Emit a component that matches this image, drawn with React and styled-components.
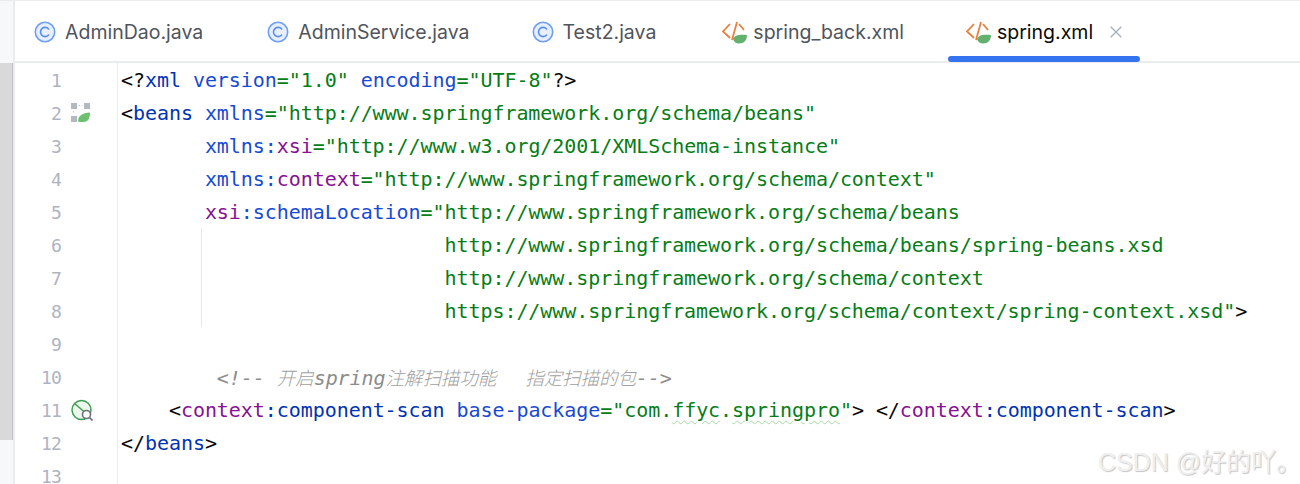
import React from "react";
import styled, { createGlobalStyle } from "styled-components";

const Global = createGlobalStyle`
  html, body { margin: 0; padding: 0; background: #fff; }
  #root { width: 1300px; height: 484px; overflow: hidden; }
`;

const Page = styled.div`
  position: relative;
  width: 1300px;
  height: 484px;
  overflow: hidden;
  display: flex;
  background: #fff;
  border-top: 1px solid #ebecf0;
  box-sizing: border-box;
`;
const Rail = styled.div`
  flex: 0 0 15px;
  background: #f7f8fa;
  border-right: 2px solid #ebecf0;
  box-sizing: border-box;
  display: flex;
  flex-direction: column;
`;
const RailTop = styled.div`
  flex: 0 0 62px;
`;
const RailThumb = styled.div`
  flex: 0 0 377px;
  width: 12px;
  background: #d9d9d9;
  border-right: 1px solid #bfbfbf;
`;
const Main = styled.div`
  flex: 1;
  min-width: 0;
  display: flex;
  flex-direction: column;
`;
const TabBar = styled.div`
  flex: 0 0 62px;
  box-sizing: border-box;
  display: flex;
  padding-left: 1px;
  border-bottom: 2px solid #ebecf0;
`;
const Tab = styled.div`
  position: relative;
  display: flex;
  align-items: center;
  height: 60px;
  box-sizing: border-box;
  padding: 1px ${p => p.$end}px 0 18px;
  font: 19.5px Inter, "Liberation Sans", sans-serif;
  color: ${p => (p.$active ? "#0a0a0a" : "#50545c")};
  &::after {
    content: ${p => (p.$active ? '""' : "none")};
    position: absolute;
    left: 0;
    right: 0;
    bottom: -1px;
    height: 6px;
    border-radius: 3px;
    background: #3574f0;
  }
`;
const TabIconSlot = styled.span`
  display: flex;
  width: 31px;
  flex: 0 0 31px;
`;
const Close = styled.span`
  display: flex;
  margin-left: 17px;
`;
const Editor = styled.div`
  flex: 1;
  display: flex;
  min-height: 0;
  padding-top: 1px;
`;
const Gutter = styled.div`
  flex: 0 0 102px;
  margin-top: -1px;
  border-right: 1px solid #ebecf0;
`;
const GutterRow = styled.div`
  height: 33px;
  box-sizing: border-box;
  padding-top: 1px;
  display: flex;
  align-items: center;
`;
const LineNo = styled.span`
  flex: 0 0 46px;
  text-align: right;
  font: 18px "DejaVu Sans Mono", monospace;
  letter-spacing: -0.8px;
  color: #aeb3c2;
`;
const Mark = styled.span`
  display: flex;
  margin-left: 10px;
`;
const Code = styled.div`
  flex: 1;
  padding-left: 3px;
  font: 20px/33px "DejaVu Sans Mono", "Noto Sans CJK SC", monospace;
  letter-spacing: -0.06px;
  white-space: pre;
`;
const Line = styled.div`
  position: relative;
  height: 33px;
  color: #080808;
  &::before {
    content: ${p => (p.$guide ? '""' : "none")};
    position: absolute;
    left: 80px;
    top: -1px;
    bottom: 1px;
    width: 1px;
    background: #e6e7eb;
  }
`;
const Tag = styled.span`color: #0033b3;`;
const Attr = styled.span`color: #174ad4;`;
const Ns = styled.span`color: #871094;`;
const Val = styled.span`color: #067d17;`;
const Comment = styled.span`
  color: #8c8c8c;
  font-style: italic;
`;
const Cjk = styled.span`
  font-family: "Noto Sans CJK SC", sans-serif;
  font-size: 18.5px;
  font-weight: 300;
  color: #a0a0a0;
`;
const CjkGap = styled.span`
  display: inline-block;
  width: 29px;
`;
const Typo = styled.span`
  text-decoration: underline wavy #a8d8a4 1px;
  text-underline-offset: 3px;
`;
const Watermark = styled.div`
  position: absolute;
  left: 1098px;
  top: 444px;
  font: 25px/34px "Liberation Sans", "Noto Sans CJK SC", sans-serif;
  white-space: nowrap;
  color: #efefef;
  text-shadow: 1px 1px 1px #c6c6c6;
`;

const ClassIcon = () => (
  <svg width="22" height="22" viewBox="0 0 22 22" fill="none">
    <circle cx="11" cy="11" r="9.7" fill="#e7effd" stroke="#6f9ff5" strokeWidth="1.6" />
    <path d="M14.6 8a4.6 4.6 0 1 0 0 6" stroke="#5a8ff0" strokeWidth="1.6" strokeLinecap="round" />
  </svg>
);
const XmlIcon = () => (
  <svg width="25" height="24" viewBox="0 0 25 24" fill="none">
    <path d="M8 4 1 11.500 8 18M15 2 10 20M17 4l5 6" stroke="#e8803c" strokeWidth="1.800" />
    <path d="M11 19c1-4 7-5 14-4 0 5-3 8.500-8 8.500-3 0-5-1.500-6-4.500z" fill="#62b16e" />
  </svg>
);
const CloseIcon = () => (
  <svg width="12" height="12" viewBox="0 0 12 12" fill="none">
    <path d="M.7.7l10.600 10.600M11.300.7.7 11.300" stroke="#a8adbd" strokeWidth="1.300" />
  </svg>
);
const BeanMark = () => (
  <svg width="19" height="20" viewBox="0 0 19 20" fill="none">
    <rect x="0" y="0" width="6" height="6" fill="#b4b8bf" />
    <rect x="13" y="0" width="6" height="6" fill="#b4b8bf" />
    <rect x="0" y="13" width="6" height="6" fill="#b4b8bf" />
    <path d="M7.500 2.500h4M2.500 8v3" stroke="#c4c7cc" strokeDasharray="1.500 1.500" />
    <path d="M7 18.500C7 13 11 10 19 9.500c0 6-2 9.500-6.500 9.500-2.500 0-4.500 0-5.500-.5z" fill="#6cc070" />
  </svg>
);
const ScanMark = () => (
  <svg width="22" height="22" viewBox="0 0 22 22" fill="none">
    <circle cx="10.500" cy="11" r="9.500" fill="#eef7ee" stroke="#3f9e55" strokeWidth="1.500" />
    <path d="M3.500 4.500l10 8.500" stroke="#3f9e55" strokeWidth="1.500" />
    <circle cx="15.500" cy="15.500" r="4" fill="#fff" stroke="#6c707e" strokeWidth="1.600" />
    <path d="M18.500 18.500l3 3" stroke="#6c707e" strokeWidth="1.700" />
  </svg>
);

const sp = n => " ".repeat(n);
const lines = [
  { key: 1, code: <><span>&lt;?</span><Tag>xml</Tag> <Attr>version</Attr><Val>="1.0"</Val> <Attr>encoding</Attr><Val>="UTF-8"</Val>?&gt;</> },
  { key: 2, mark: <BeanMark />, code: <>&lt;<Tag>beans</Tag> <Attr>xmlns</Attr><Val>="http://www.springframework.org/schema/beans"</Val></> },
  { key: 3, code: <>{sp(7)}<Attr>xmlns:</Attr><Ns>xsi</Ns><Val>="http://www.w3.org/2001/XMLSchema-instance"</Val></> },
  { key: 4, code: <>{sp(7)}<Attr>xmlns:</Attr><Ns>context</Ns><Val>="http://www.springframework.org/schema/context"</Val></> },
  { key: 5, code: <>{sp(7)}<Ns>xsi</Ns><Attr>:schemaLocation</Attr><Val>="http://www.springframework.org/schema/beans</Val></> },
  { key: 6, guide: true, code: <Val>{sp(27)}http://www.springframework.org/schema/beans/spring-beans.xsd</Val> },
  { key: 7, guide: true, code: <Val>{sp(27)}http://www.springframework.org/schema/context</Val> },
  { key: 8, guide: true, code: <><Val>{sp(27)}https://www.springframework.org/schema/context/spring-context.xsd"</Val>&gt;</> },
  { key: 9, code: null },
  { key: 10, code: <Comment>{sp(8)}&lt;!-- <Cjk>开启</Cjk>spring<Cjk>注解扫描功能</Cjk><CjkGap /><Cjk>指定扫描的包</Cjk>--&gt;</Comment> },
  { key: 11, mark: <ScanMark />, code: <>{sp(4)}&lt;<Ns>context</Ns><Tag>:component-scan</Tag> <Attr>base-package</Attr><Val>="com.<Typo>ffyc</Typo>.<Typo>springpro</Typo>"</Val>&gt; &lt;/<Ns>context</Ns><Tag>:component-scan</Tag>&gt;</> },
  { key: 12, code: <>&lt;/<Tag>beans</Tag>&gt;</> },
  { key: 13, code: null },
];

const tabs = [
  { name: "AdminDao.java", icon: <ClassIcon />, end: 46 },
  { name: "AdminService.java", icon: <ClassIcon />, end: 44 },
  { name: "Test2.java", icon: <ClassIcon />, end: 48 },
  { name: "spring_back.xml", icon: <XmlIcon />, end: 44 },
  { name: "spring.xml", icon: <XmlIcon />, end: 18, active: true },
];

export default function App() {
  return (
    <>
      <Global />
      <Page>
        <Rail>
          <RailTop />
          <RailThumb />
        </Rail>
        <Main>
          <TabBar>
            {tabs.map(t => (
              <Tab key={t.name} $active={t.active} $end={t.end}>
                <TabIconSlot>{t.icon}</TabIconSlot>
                {t.name}
                {t.active && <Close><CloseIcon /></Close>}
              </Tab>
            ))}
          </TabBar>
          <Editor>
            <Gutter>
              {lines.map(l => (
                <GutterRow key={l.key}>
                  <LineNo>{l.key}</LineNo>
                  {l.mark && <Mark>{l.mark}</Mark>}
                </GutterRow>
              ))}
            </Gutter>
            <Code>
              {lines.map(l => (
                <Line key={l.key} $guide={l.guide}>{l.code}</Line>
              ))}
            </Code>
          </Editor>
        </Main>
        <Watermark>CSDN @好的吖。</Watermark>
      </Page>
    </>
  );
}
